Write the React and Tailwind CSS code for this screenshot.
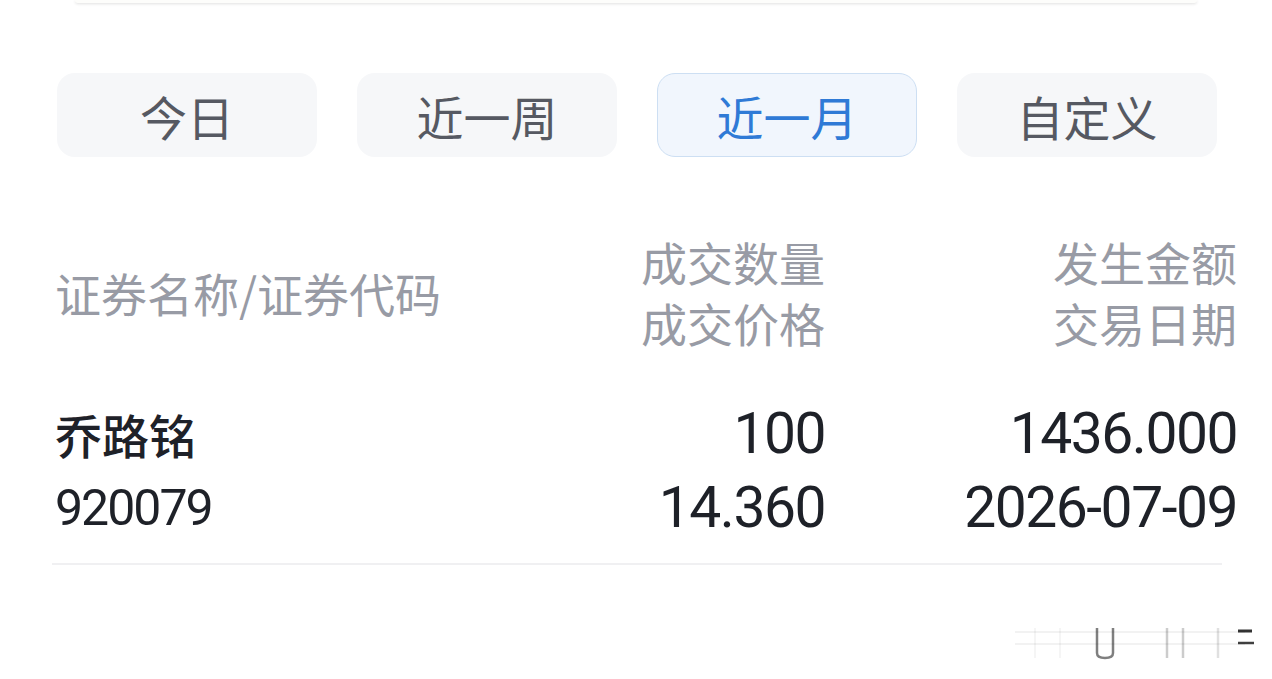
import React, { useState } from "react";

const tabs = ["今日", "近一周", "近一月", "自定义"];

const cjk = { fontFamily: '"Noto Sans CJK SC", "Noto Sans", sans-serif' };
const num = { fontFamily: 'Roboto, "Noto Sans CJK SC", sans-serif' };

const App = () => {
  const [active, setActive] = useState(2);

  return (
    <div className="relative w-[1272px] h-[679px] overflow-hidden bg-white" style={cjk}>
      {/* Card edge peeking from above */}
      <div className="mx-[75px] h-[3px] rounded-b-md bg-[#fdfdfb] shadow-[0_1px_3px_rgba(0,0,0,0.12)]" />

      {/* Period tabs */}
      <div className="flex gap-[40px] pl-[57px] mt-[70px]">
        {tabs.map((t, i) => (
          <button
            key={t}
            onClick={() => setActive(i)}
            className={`w-[260px] h-[84px] rounded-[18px] text-[47px] leading-none flex items-center justify-center ${
              i === active
                ? "bg-[#f1f6fd] text-[#2f7ad6] border-[1.5px] border-[#cddff3]"
                : "bg-[#f6f7f9] text-[#565962] border-[1.5px] border-transparent"
            }`}
          >
            {t}
          </button>
        ))}
      </div>

      {/* Column headers */}
      <div className="flex items-center pl-[55px] pr-[35px] mt-[74px] text-[46px] leading-[61px] text-[#989ba5]">
        <div className="flex-1">证券名称/证券代码</div>
        <div className="w-[225px] text-right">
          <div>成交数量</div>
          <div>成交价格</div>
        </div>
        <div className="w-[412px] text-right">
          <div>发生金额</div>
          <div>交易日期</div>
        </div>
      </div>

      {/* Record row */}
      <div className="flex pl-[55px] pr-[35px] mt-[44px] text-[#1e2128] leading-[74px]">
        <div className="flex-1">
          <div className="text-[47px] font-medium">乔路铭</div>
          <div className="text-[50px] tracking-[-2px]" style={num}>920079</div>
        </div>
        <div className="w-[225px] text-right text-[57px] tracking-[-1.5px]" style={num}>
          <div>100</div>
          <div>14.360</div>
        </div>
        <div className="w-[412px] text-right text-[57px] tracking-[-1.5px]" style={num}>
          <div>1436.000</div>
          <div>2026-07-09</div>
        </div>
      </div>

      <div className="ml-[52px] mt-[18px] w-[1170px] h-[2px] bg-[#f0f0f2]" />

      {/* Faint watermark remnant */}
      <svg className="absolute left-[1010px] top-[620px]" width="250" height="45" viewBox="0 0 250 45">
        <g stroke="#000" fill="none">
          <line x1="5" y1="12" x2="235" y2="12" strokeWidth="2" opacity="0.05" />
          <line x1="5" y1="24" x2="235" y2="24" strokeWidth="2" opacity="0.05" />
          <line x1="25" y1="8" x2="25" y2="38" strokeWidth="2" opacity="0.04" />
          <line x1="50" y1="8" x2="50" y2="38" strokeWidth="2" opacity="0.04" />
          <path d="M87 8 V33 Q87 38 95 38 Q103 38 103 33 V8" strokeWidth="2.5" opacity="0.5" />
          <line x1="157" y1="8" x2="157" y2="38" strokeWidth="2.5" opacity="0.2" />
          <line x1="173" y1="8" x2="173" y2="38" strokeWidth="2.5" opacity="0.2" />
          <line x1="208" y1="8" x2="208" y2="38" strokeWidth="2.5" opacity="0.12" />
          <line x1="228" y1="11" x2="242" y2="11" strokeWidth="3" opacity="0.8" />
          <line x1="228" y1="23" x2="244" y2="23" strokeWidth="2.5" opacity="0.75" />
        </g>
      </svg>
    </div>
  );
};

export default App;
